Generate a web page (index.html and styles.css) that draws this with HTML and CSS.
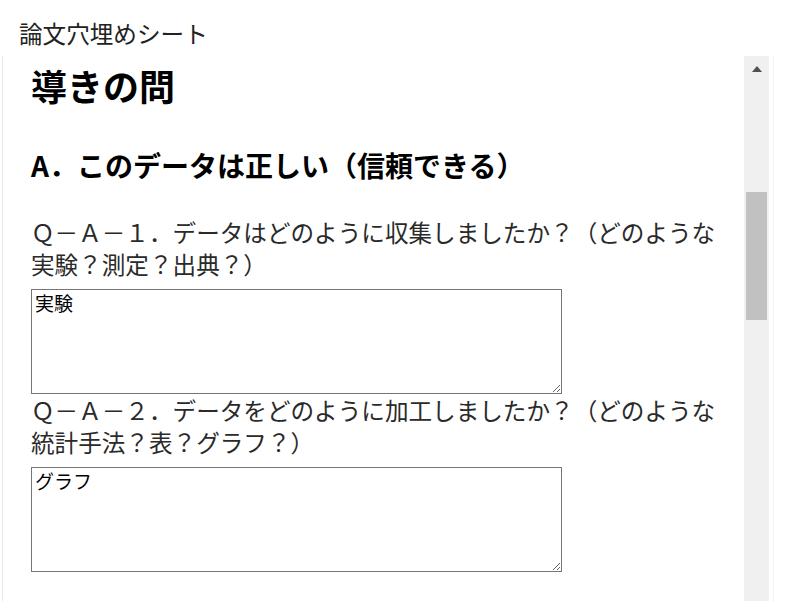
FILE: index.html
```html
<!DOCTYPE html>
<html lang="ja">
<head>
<meta charset="utf-8">
<title>論文穴埋めシート</title>
<link rel="stylesheet" href="styles.css">
</head>
<body>
<header class="page-title">論文穴埋めシート</header>
<div class="panel">
  <main class="content">
    <h1 class="sheet-title">導きの問</h1>
    <h2 class="section-title">A．このデータは正しい（信頼できる）</h2>
    <p class="question">Ｑ－Ａ－１．データはどのように収集しましたか？（どのような実験？測定？出典？）</p>
    <textarea class="answer">実験</textarea>
    <p class="question">Ｑ－Ａ－２．データをどのように加工しましたか？（どのような統計手法？表？グラフ？）</p>
    <textarea class="answer">グラフ</textarea>
  </main>
  <div class="scrollbar">
    <div class="sb-up"><span class="sb-arrow"></span></div>
    <div class="sb-thumb"></div>
  </div>
</div>
</body>
</html>
```
FILE: styles.css
```css
html, body {
  margin: 0;
  padding: 0;
  overflow: hidden;
  background: #fff;
}

body {
  font-family: "Noto Sans CJK JP", "Noto Sans", sans-serif;
  color: #222;
  padding-top: 15px;
}

.page-title {
  font-size: 23.6px;
  line-height: 36px;
  padding-left: 19px;
  color: #222;
  margin-bottom: 5px;
}

.panel {
  display: flex;
  margin-left: 2px;
  width: 772px;
  box-sizing: border-box;
  height: 580px;
  border-left: 1px solid #e8e8e8;
  border-right: 1px solid #f2f2f2;
  padding-right: 4px;
}

.content {
  flex: 1;
  overflow: hidden;
  padding: 2px 12px 0 28px;
}

.sheet-title {
  margin: 0;
  font-size: 36px;
  line-height: 54px;
  font-weight: 700;
  color: #000;
}

.section-title {
  margin: 32px 0 0;
  font-size: 28px;
  line-height: 42px;
  font-weight: 700;
  color: #000;
}

.question {
  margin: 0;
  font-size: 23.6px;
  line-height: 32px;
  color: #2a2a2a;
}

.section-title + .question {
  margin-top: 30px;
}

.answer {
  display: block;
  box-sizing: border-box;
  width: 531px;
  height: 105px;
  margin: 9px 0 0;
  padding: 2px 3px;
  border: 1px solid #767676;
  font-family: "Noto Sans CJK JP", monospace;
  font-size: 19px;
  line-height: 22px;
  color: #000;
  background: #fff;
}

.scrollbar {
  width: 25px;
  flex: none;
  background: #f0f0f0;
  display: flex;
  flex-direction: column;
  align-items: center;
}

.sb-up {
  width: 25px;
  height: 25px;
  display: flex;
  align-items: center;
  justify-content: center;
}

.sb-arrow {
  width: 0;
  height: 0;
  border-left: 5.5px solid transparent;
  border-right: 5.5px solid transparent;
  border-bottom: 6px solid #505050;
  margin-top: 1px;
}

.sb-thumb {
  width: 21px;
  height: 128px;
  margin-top: 111px;
  background: #c1c1c1;
}
```
